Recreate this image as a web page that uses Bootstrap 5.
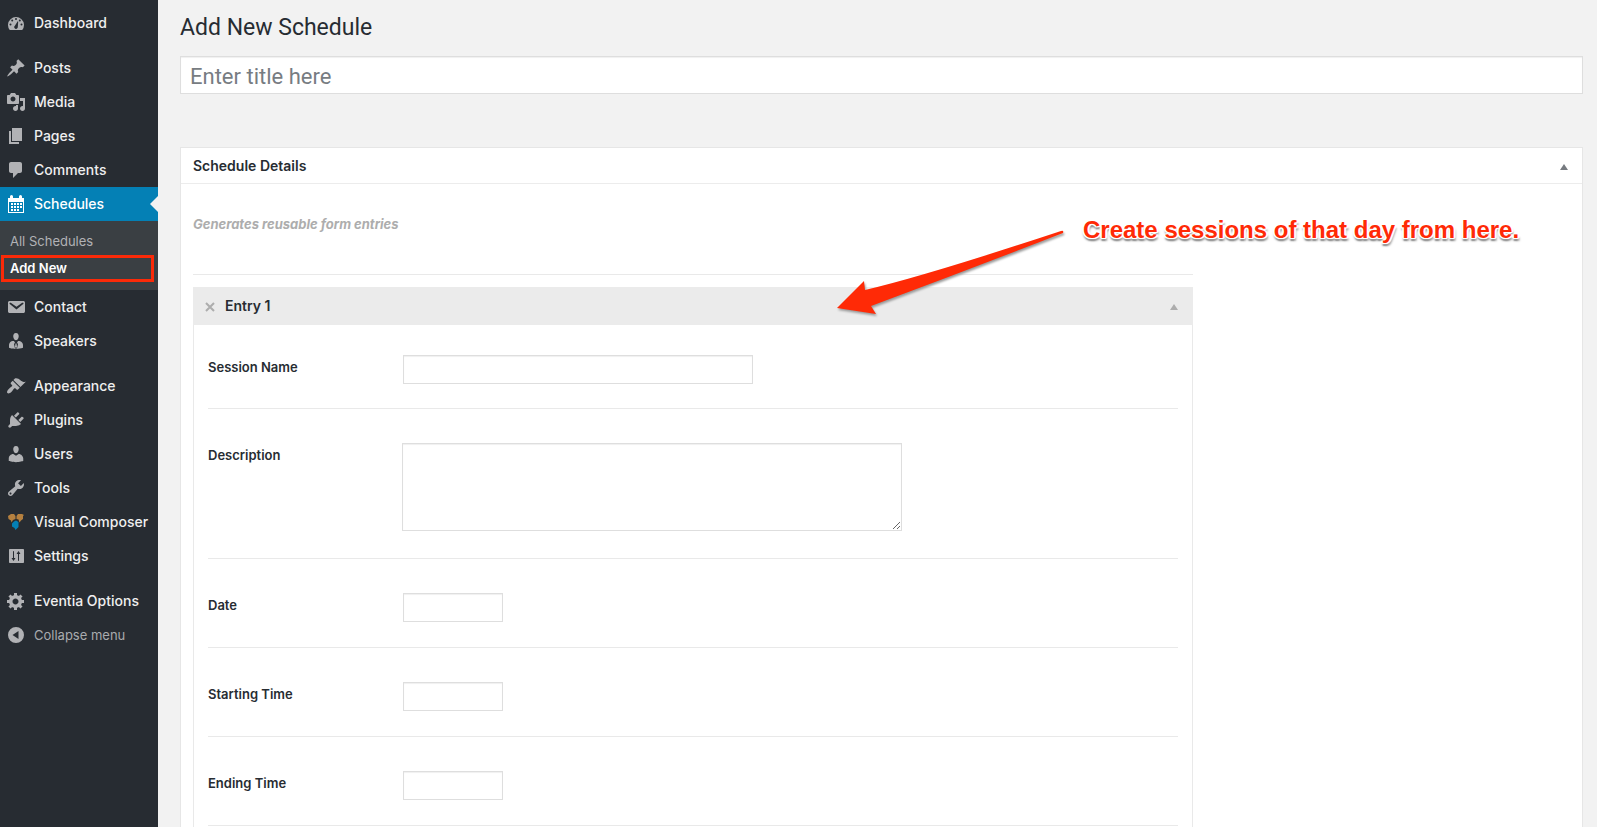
<!DOCTYPE html>
<html lang="en">
<head>
<meta charset="utf-8">
<meta name="viewport" content="width=device-width, initial-scale=1">
<title>Add New Schedule</title>
<link href="https://cdn.jsdelivr.net/npm/bootstrap@5.3.0/dist/css/bootstrap.min.css" rel="stylesheet">
<style>
  body { background: #f2f2f2; color: #272c32; font-family: Inter, Roboto, sans-serif; font-size: 13px; line-height: 20px; }

  /* Admin menu */
  .admin-menu { width: 158px; background: #272c32; padding-top: 6px; }
  .menu-link { height: 34px; padding-left: 6px; gap: 8px; color: #efefef; font-size: 14px; font-weight: 500; white-space: nowrap; }
  .menu-link:hover { color: #00b9eb; }
  .menu-link svg { width: 20px; height: 20px; fill: #b1b2b5; flex: none; }
  .menu-link.current { background: #0480b5; color: #fff; position: relative; }
  .menu-link.current svg { fill: #fff; }
  .menu-link.current::after { content: ""; position: absolute; right: 0; top: 9px; border: 8px solid transparent; border-left: 0; border-right-color: #f2f2f2; }
  .menu-gap { margin-top: 11px; }
  .menu-sub { background: #3a3f43; padding: 7px 0 8px; }
  .menu-sub a { display: block; height: 27px; line-height: 27px; padding-left: 10px; color: #b1b2b5; }
  .menu-sub a.chosen { margin: 0 4px 0 1px; border: 3px solid #fb2a08; line-height: 21px; padding-left: 6px; color: #fff; font-weight: 600; }
  .collapse-btn { background: none; border: 0; color: #a9abae; font-size: 13px; font-weight: 400; }

  /* Content column */
  .content-area { padding: 12px 14px 0 22px; }
  .page-title { font-family: Roboto, sans-serif; font-size: 23px; line-height: 32px; font-weight: 400; margin-bottom: 12px; }
  .field { border: 1px solid #dedede; background: #fff; box-shadow: inset 0 1px 1px #f0f0f0; display: block; }
  .title-field { font-family: Roboto, sans-serif; height: 38px; width: 100%; padding: 2px 9px 0; font-size: 22px; margin-bottom: 53px; }
  .title-field::placeholder { color: #777c82; }
  .postbox { background: #fff; border: 1px solid #e6e6e6; border-bottom: 0; position: relative; }
  .postbox-head { height: 36px; padding: 0 12px; border-bottom: 1px solid #ececec; }
  .postbox-head h2, .entry-head h3 { font-size: 14px; line-height: 20px; font-weight: 600; margin: 0; }
  .toggle { background: none; border: 0; padding: 2px 0 0; width: 12px; color: #777b80; line-height: 0; }
  .toggle svg, .remove svg { display: block; }
  .hint { color: #adadad; font-style: italic; font-weight: 700; height: 91px; padding-top: 30px; border-bottom: 1px solid #e9e9e9; margin-bottom: 12px; }
  .postbox-body { padding: 0 12px; }
  .entries { max-width: 1000px; }
  .entry-box { border: 1px solid #e9e9e9; border-top: 0; border-bottom: 0; }
  .entry-head { height: 38px; background: #ebebeb; padding: 0 13px 0 11px; }
  .entry-head .toggle, .remove { color: #adadad; }
  .remove { background: none; border: 0; padding: 0; }
  .entry-fields { padding: 0 14px; }
  .entry-row { padding: 34px 0 25px; border-bottom: 1px solid #e9e9e9; }
  .entry-row:first-child { padding: 30px 0 24px; }
  .entry-row label { width: 195px; font-weight: 600; padding-top: 2px; }
  .entry-row .field { height: 29px; width: 100px; }
  .entry-row .field-wide { width: 350px; }
  .entry-row .field-area { width: 500px; height: 88px; margin: 0 0 2px -1px; resize: both; }

  /* Tutorial callout that lies over the form */
  .callout { left: 654px; top: 76px; width: 710px; height: 100px; pointer-events: none; }
  .callout-text { left: 248px; top: -9px; font: bold 24px/30px "Liberation Sans", Arial, sans-serif; color: #ff2a06; white-space: nowrap;
    text-shadow: -2px 0 1px #fff, 2px 0 1px #fff, 0 -2px 1px #fff, 0 1px 0 #fff, -1px 1px 0 #fff, 1px 1px 0 #fff, 0 3px 1px #999, 2px 3px 2px #aaa, -1px 3px 2px #bbb; }
  .callout svg { filter: drop-shadow(1px 2px 1px #999); left: 0; top: 0; overflow: visible; }
</style>
</head>
<body>
<div class="d-flex min-vh-100">
  <nav class="admin-menu flex-shrink-0" aria-label="Admin menu">
    <a href="#" class="menu-link d-flex align-items-center text-decoration-none"><svg viewBox="0 0 20 20"><path fill-rule="evenodd" d="M3.760 17h12.480A8 8 0 1 0 3.760 17zM10 5a1 1 0 1 1 0 2 1 1 0 0 1 0-2zM6.200 6.500a1 1 0 1 1 0 2 1 1 0 0 1 0-2zM13.800 6.500a1 1 0 1 1 0 2 1 1 0 0 1 0-2zM4.500 10.500a1 1 0 1 1 0 2 1 1 0 0 1 0-2zM15.500 10.500a1 1 0 1 1 0 2 1 1 0 0 1 0-2zM11.700 8.300l.5.2-.4 5.600c0 1-.8 1.800-1.800 1.800s-1.800-.8-1.800-1.800c0-.6.300-1.100.700-1.400z"/></svg>Dashboard</a>
    <a href="#" class="menu-link menu-gap d-flex align-items-center text-decoration-none"><svg viewBox="0 0 20 20"><path d="M10.440 3.020l1.820-1.820 6.360 6.350-1.830 1.820c-1.050-.68-2.480-.57-3.410.36l-.75.75c-.92.93-1.040 2.350-.35 3.410l-1.830 1.820-2.410-2.410-2.800 2.790c-.42.42-3.380 2.710-3.800 2.290s1.860-3.390 2.280-3.810l2.790-2.790L4.100 9.360l1.830-1.820c1.050.69 2.480.57 3.400-.36l.75-.75c.93-.92 1.050-2.350.36-3.410z"/></svg>Posts</a>
    <a href="#" class="menu-link d-flex align-items-center text-decoration-none"><svg viewBox="0 0 20 20"><path d="M13 11V4c0-.55-.45-1-1-1h-1.670L9 1H5L3.670 3H2c-.55 0-1 .45-1 1v7c0 .55.45 1 1 1h10c.55 0 1-.45 1-1zM7 4.500c1.380 0 2.500 1.120 2.500 2.500S8.380 9.500 7 9.500 4.500 8.380 4.500 7 5.620 4.500 7 4.500zM14 6h5v10.500c0 1.380-1.120 2.500-2.500 2.500S14 17.880 14 16.500s1.120-2.500 2.500-2.500c.17 0 .34.02.5.05V9h-3V6zm-4 8.050V13h2v3.500c0 1.380-1.120 2.500-2.500 2.500S7 17.880 7 16.500 8.120 14 9.500 14c.17 0 .34.02.5.05z"/></svg>Media</a>
    <a href="#" class="menu-link d-flex align-items-center text-decoration-none"><svg viewBox="0 0 20 20"><path d="M6 15V2h10v13H6zm-1 1h8v2H3V5h2v11z"/></svg>Pages</a>
    <a href="#" class="menu-link d-flex align-items-center text-decoration-none"><svg viewBox="0 0 20 20"><path d="M5 2h9c1.100 0 2 .9 2 2v7c0 1.100-.9 2-2 2h-2l-5 5v-5H5c-1.100 0-2-.9-2-2V4c0-1.100.9-2 2-2z"/></svg>Comments</a>
    <a href="#" class="menu-link current d-flex align-items-center text-decoration-none" aria-current="page"><svg viewBox="0 0 20 20"><path fill-rule="evenodd" d="M4 4V2.500a1.500 1.500 0 0 1 3 0V4h6V2.500a1.500 1.500 0 0 1 3 0V4h2v15H2V4zM3 8v10h14V8z"/><path d="M5 9h2v2H5zM8 9h2v2H8zM11 9h2v2h-2zM14 9h2v2h-2zM5 12h2v2H5zM8 12h2v2H8zM11 12h2v2h-2zM14 12h2v2h-2zM5 15h2v2H5zM8 15h2v2H8zM11 15h2v2h-2z"/></svg>Schedules</a>
    <div class="menu-sub">
      <a href="#" class="text-decoration-none">All Schedules</a>
      <a href="#" class="chosen text-decoration-none">Add New</a>
    </div>
    <a href="#" class="menu-link d-flex align-items-center text-decoration-none"><svg viewBox="0 0 20 20"><path d="M3.870 4h13.250C18.370 4 19 4.590 19 5.790v8.420c0 1.190-.63 1.790-1.880 1.790H3.870c-1.250 0-1.880-.6-1.880-1.790V5.790c0-1.200.63-1.790 1.880-1.790zm6.620 8.600l6.740-5.530c.24-.2.43-.66.13-1.070-.29-.41-.82-.42-1.170-.17l-5.700 3.860L4.800 5.830c-.35-.25-.88-.24-1.170.17-.3.41-.11.87.13 1.070z"/></svg>Contact</a>
    <a href="#" class="menu-link d-flex align-items-center text-decoration-none"><svg viewBox="0 0 20 20"><path d="M10 9.250c-2.270 0-2.730-3.440-2.730-3.440C7 4.020 7.820 2 9.970 2c2.160 0 2.980 2.020 2.710 3.810 0 0-.41 3.440-2.680 3.440zM16.500 12.240c.41.7.5 1.410.5 2.140v2.490c-2 .8-4.600 1.130-7 1.130s-5-.3-7-1.130v-2.490c0-.75.07-1.460.46-2.150s.81-1.250 1.500-1.680C5.660 10.120 7.190 10 8 10l1 1.670L8 13l1 4.500h2L12 13l-1-1.330L11.970 10c.82 0 2.020.12 2.800.55.7.42 1.310.99 1.730 1.690zM9.500 12.500h1l.5 3.500-1 1-1-1z"/></svg>Speakers</a>
    <a href="#" class="menu-link menu-gap d-flex align-items-center text-decoration-none"><svg viewBox="0 0 20 20"><path d="M14.480 11.060L7.410 3.990l1.500-1.500c.5-.56 2.300-.47 3.510.32 1.210.8 1.430 1.280 2.910 2.100 1.180.64 2.450 1.260 4.450.85zm-.71.71L6.700 4.700 4.930 6.470c-.39.39-.39 1.020 0 1.410l1.060 1.060c.39.39.39 1.030 0 1.420-.6.6-1.430 1.110-2.210 1.690-.35.26-.7.53-1.010.84C1.430 14.230.4 16.080 1.400 17.070c.99 1 2.840-.03 4.180-1.360.31-.31.58-.66.85-1.020.57-.78 1.080-1.610 1.690-2.210.39-.39 1.020-.39 1.410 0l1.060 1.060c.39.39 1.020.39 1.410 0z"/></svg>Appearance</a>
    <a href="#" class="menu-link d-flex align-items-center text-decoration-none"><svg viewBox="0 0 20 20"><path d="M13.110 4.360L9.870 7.600 8 5.730l3.240-3.240c.35-.34 1.050-.2 1.560.32.52.51.66 1.210.31 1.550zm-8 1.770l.91-1.120 9.010 9.010-1.190.84c-.71.71-2.630 1.160-3.820 1.160H6.140L4.900 17.260c-.59.59-1.540.59-2.120 0-.59-.58-.59-1.530 0-2.120l1.240-1.240v-3.880c0-1.130.4-3.190 1.090-3.890zm7.260 3.970l3.240-3.240c.34-.35 1.040-.21 1.550.31.52.51.66 1.210.31 1.550l-3.240 3.250z"/></svg>Plugins</a>
    <a href="#" class="menu-link d-flex align-items-center text-decoration-none"><svg viewBox="0 0 20 20"><path d="M10 9.250c-2.270 0-2.730-3.440-2.730-3.440C7 4.020 7.820 2 9.970 2c2.160 0 2.980 2.020 2.710 3.810 0 0-.41 3.440-2.680 3.440zm0 2.570L12.720 10c2.390 0 4.520 2.330 4.520 4.530v2.490s-3.650 1.130-7.240 1.130c-3.650 0-7.240-1.130-7.240-1.130v-2.490c0-2.250 1.940-4.480 4.470-4.480z"/></svg>Users</a>
    <a href="#" class="menu-link d-flex align-items-center text-decoration-none"><svg viewBox="0 0 20 20"><path d="M16.680 9.770c-1.340 1.340-3.300 1.670-4.950.99l-5.410 6.520c-.99.99-2.590.99-3.580 0s-.99-2.590 0-3.570l6.520-5.420c-.68-1.650-.35-3.610.99-4.950 1.280-1.280 3.120-1.620 4.720-1.060l-2.890 2.890 2.820 2.820 2.860-2.870c.53 1.580.18 3.390-1.080 4.650zM3.810 16.210c.4.39 1.040.39 1.430 0 .4-.4.4-1.040 0-1.430-.39-.4-1.030-.4-1.430 0-.39.39-.39 1.030 0 1.430z"/></svg>Tools</a>
    <a href="#" class="menu-link d-flex align-items-center text-decoration-none"><svg viewBox="0 0 20 20"><path fill="#b5803f" d="M2 4l3-2h3l1.500 2v3L7 8 5.500 10.500 5 8.500 2.500 7zM10.500 4L12 2h4l2 1-1 1v3l-2 1.500-1.500 2-1-3-2-.5z"/><path fill="#0480b5" d="M6 11.500L8 9.500 10 8.500l2.500 1.500v5L9.500 18l-1-2-2.500-1.500z"/></svg>Visual Composer</a>
    <a href="#" class="menu-link d-flex align-items-center text-decoration-none"><svg viewBox="0 0 20 20"><path d="M18 16V4c0-.55-.45-1-1-1H4c-.55 0-1 .45-1 1v12c0 .55.45 1 1 1h13c.55 0 1-.45 1-1zM8 12h1.500L7.500 15 5.500 12H7V5.500c0-.28.22-.5.5-.5s.5.22.5.5zM13 8v6.500c0 .28-.22.5-.5.5s-.5-.22-.5-.5V8h-1.500l2-3 2 3z"/></svg>Settings</a>
    <a href="#" class="menu-link menu-gap d-flex align-items-center text-decoration-none"><svg viewBox="0 0 20 20"><path d="M18 12h-2.180c-.17.7-.44 1.350-.81 1.930l1.540 1.540-2.100 2.100-1.540-1.540c-.58.36-1.230.63-1.910.79V19H8v-2.180c-.68-.16-1.330-.43-1.910-.79l-1.540 1.540-2.120-2.120 1.540-1.540c-.36-.58-.63-1.230-.79-1.910H1V9.030h2.170c.16-.7.44-1.350.8-1.940L2.430 5.550l2.100-2.100 1.540 1.540c.58-.37 1.240-.64 1.930-.81V2h3v2.180c.68.16 1.330.43 1.910.79l1.540-1.540 2.120 2.120-1.540 1.540c.36.59.64 1.240.8 1.940H18V12zm-8.500 1.500c1.660 0 3-1.340 3-3s-1.340-3-3-3-3 1.340-3 3 1.340 3 3 3z"/></svg>Eventia Options</a>
    <button type="button" class="menu-link collapse-btn d-flex align-items-center"><svg viewBox="0 0 20 20"><path fill-rule="evenodd" d="M10 2a8 8 0 1 1 0 16 8 8 0 0 1 0-16zM12.500 6v8L6.500 10z"/></svg>Collapse menu</button>
  </nav>

  <main class="content-area flex-grow-1 d-flex flex-column">
    <h1 class="page-title">Add New Schedule</h1>
    <input type="text" class="field title-field" placeholder="Enter title here" aria-label="Title">

    <section class="postbox flex-grow-1 d-flex flex-column">
      <div class="postbox-head d-flex align-items-center justify-content-between">
        <h2>Schedule Details</h2>
        <button type="button" class="toggle" aria-label="Toggle panel"><svg width="12" height="6" viewBox="0 0 12 6"><path fill="currentColor" d="M6 0l4 6H2z"/></svg></button>
      </div>
      <div class="postbox-body flex-grow-1 d-flex flex-column">
        <div class="entries flex-grow-1 d-flex flex-column">
          <div class="hint">Generates reusable form entries</div>
          <div class="entry-head d-flex align-items-center">
            <button type="button" class="remove me-2" aria-label="Remove entry"><svg width="13" height="12" viewBox="0 0 13 12"><path d="M2 3l8 8M10 3l-8 8" stroke="currentColor" stroke-width="2"/></svg></button>
            <h3 class="flex-grow-1">Entry 1</h3>
            <button type="button" class="toggle" aria-label="Toggle entry"><svg width="12" height="6" viewBox="0 0 12 6"><path fill="currentColor" d="M6 0l4 6H2z"/></svg></button>
          </div>
          <div class="entry-box flex-grow-1">
            <div class="entry-fields">
              <div class="entry-row d-flex align-items-start"><label for="session">Session Name</label><input id="session" type="text" class="field field-wide"></div>
              <div class="entry-row d-flex align-items-start"><label for="description">Description</label><textarea id="description" class="field field-area"></textarea></div>
              <div class="entry-row d-flex align-items-start"><label for="date">Date</label><input id="date" type="text" class="field"></div>
              <div class="entry-row d-flex align-items-start"><label for="start">Starting Time</label><input id="start" type="text" class="field"></div>
              <div class="entry-row d-flex align-items-start"><label for="end">Ending Time</label><input id="end" type="text" class="field"></div>
            </div>
          </div>
        </div>
      </div>
      <div class="callout position-absolute">
        <svg class="position-absolute" width="232" height="92" viewBox="0 0 232 92"><path fill="#ff2a06" d="M2 84L29 57l1 9Q90 52 226 7q3-1 2 2Q130 47 36 82l5 8z"/></svg>
        <span class="callout-text position-absolute">Create sessions of that day from here.</span>
      </div>
    </section>
  </main>
</div>
<script src="https://cdn.jsdelivr.net/npm/bootstrap@5.3.0/dist/js/bootstrap.bundle.min.js"></script>
</body>
</html>
